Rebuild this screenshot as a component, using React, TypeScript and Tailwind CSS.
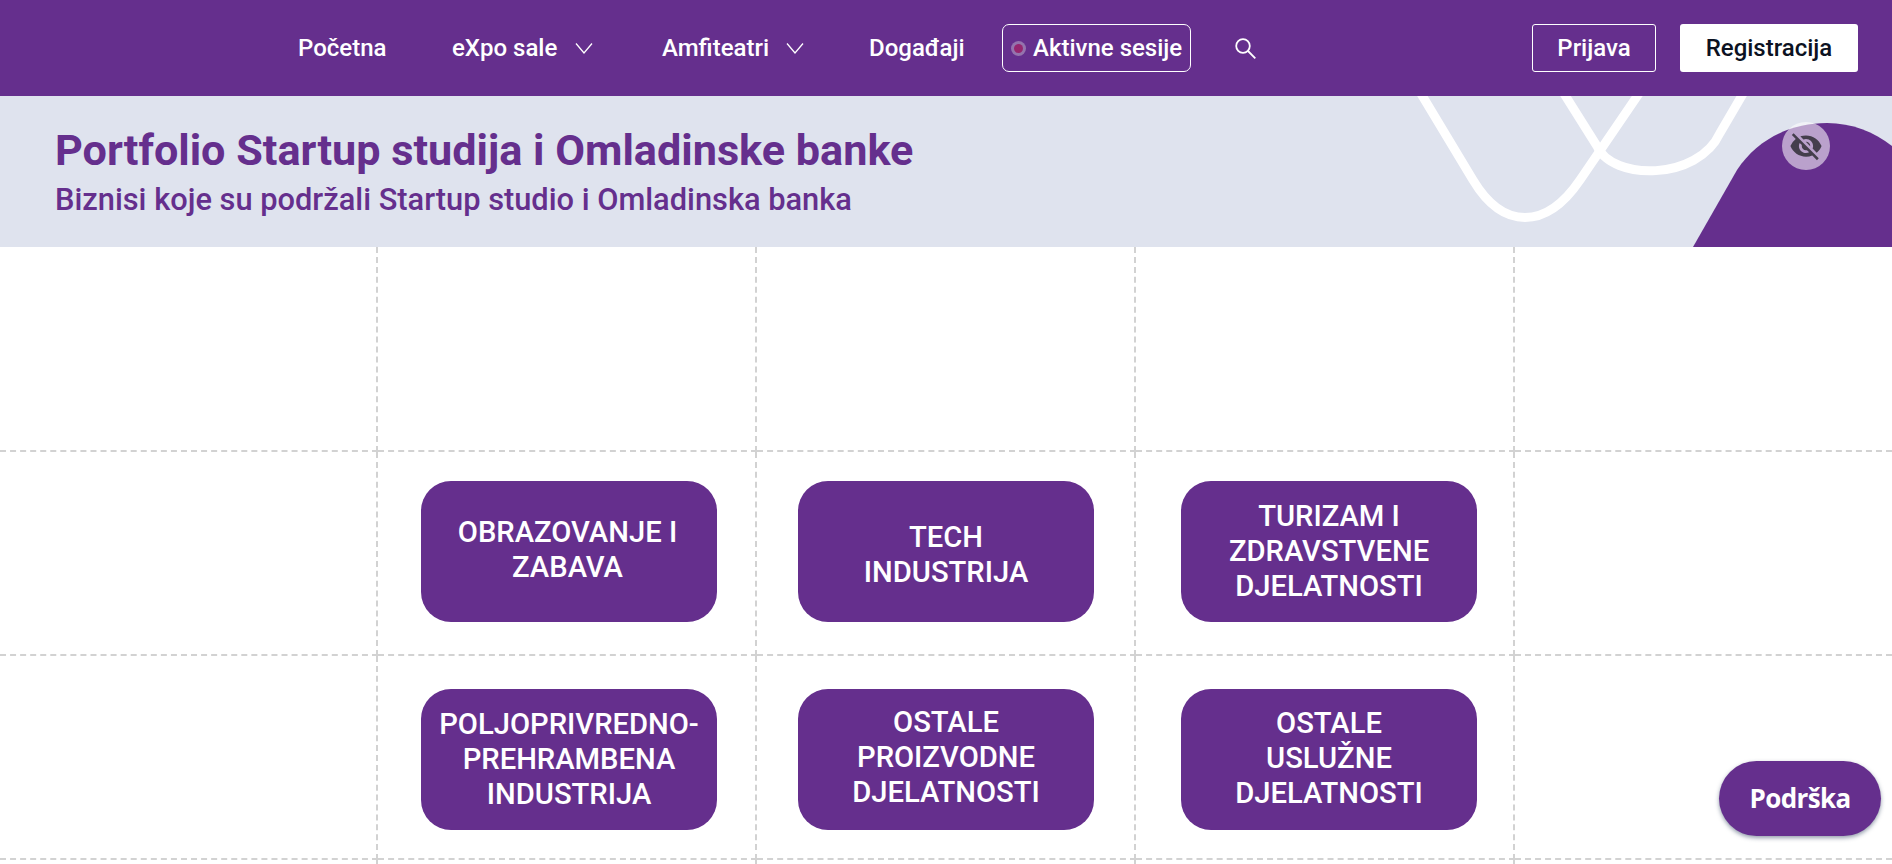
import { MdVisibilityOff } from "react-icons/md";

const rows = [
  [
    { lines: ["OBRAZOVANJE I", "ZABAVA"], pos: "mt-[29px] ml-[43px] pr-[3px] pb-[3px]" },
    { lines: ["TECH", "INDUSTRIJA"], pos: "mt-[29px] ml-[41px] pt-[6px]" },
    { lines: ["TURIZAM I", "ZDRAVSTVENE", "DJELATNOSTI"], pos: "mt-[29px] ml-[45px]" },
  ],
  [
    { lines: ["POLJOPRIVREDNO-", "PREHRAMBENA", "INDUSTRIJA"], pos: "mt-[33px] ml-[43px] pb-[1px]" },
    { lines: ["OSTALE", "PROIZVODNE", "DJELATNOSTI"], pos: "mt-[33px] ml-[41px] pb-[5px]" },
    { lines: ["OSTALE", "USLUŽNE", "DJELATNOSTI"], pos: "mt-[33px] ml-[45px] pb-[2px]" },
  ],
];

const cell = "border-r-2 border-b-2 border-dashed border-[#d2d2d2]";
const lastCell = "border-b-2 border-dashed border-[#d2d2d2]";

function Chevron({ className }: { className: string }) {
  return (
    <svg className={className} width="18" height="11" viewBox="0 0 18 11" fill="none" stroke="#fff" strokeWidth="1.3">
      <path d="M1 0.5 L9 10 L17 0.5" />
    </svg>
  );
}

function CategoryRow({ items }: { items: (typeof rows)[number] }) {
  return (
    <>
      <div className={cell} />
      {items.map((item) => (
        <div key={item.lines.join()} className={cell}>
          <button
            className={`flex h-[141px] w-[296px] flex-col items-center justify-center rounded-[30px] bg-[#652f8d] text-[29.2px] leading-[35px] font-medium text-white ${item.pos}`}
          >
            {item.lines.map((line) => (
              <span key={line}>{line}</span>
            ))}
          </button>
        </div>
      ))}
      <div className={lastCell} />
    </>
  );
}

export default function App() {
  return (
    <div className="relative h-screen overflow-hidden bg-white font-['Roboto',sans-serif]">
      <header className="flex h-[96px] items-center bg-[#652f8d] pr-[34px] pl-[298px] text-[24px] font-medium text-white">
        <nav className="flex items-center">
          <a className="w-[154px]">Početna</a>
          <a className="flex w-[210px] items-center">
            eXpo sale
            <Chevron className="ml-[18px]" />
          </a>
          <a className="flex w-[207px] items-center">
            Amfiteatri
            <Chevron className="ml-[17px]" />
          </a>
          <a className="w-[133px]">Događaji</a>
          <a className="flex h-[48px] w-[189px] items-center rounded-[7px] border border-white pl-[8px]">
            <span className="mr-[7px] flex size-[15px] shrink-0 items-center justify-center rounded-full bg-[#9473ad]">
              <span className="size-[9px] rounded-full bg-[#96266f]" />
            </span>
            Aktivne sesije
          </a>
          <svg className="ml-[44px]" width="21" height="21" viewBox="0 0 21 21" fill="none" stroke="#fff" strokeWidth="1.8">
            <circle cx="8" cy="8" r="6.8" />
            <path d="M13 13 L20.3 20.3" />
          </svg>
        </nav>
        <div className="ml-auto flex items-center gap-[24px]">
          <a className="flex h-[48px] w-[124px] items-center justify-center rounded-[3px] border border-white">
            Prijava
          </a>
          <a className="flex h-[48px] w-[178px] items-center justify-center rounded-[3px] bg-white text-[#0c1222]">
            Registracija
          </a>
        </div>
      </header>

      <section className="relative h-[151px] overflow-hidden bg-[#dfe3ee] pt-[29px] pl-[55px] text-[#652f8d]">
        <svg className="absolute top-0 left-[1400px] h-[151px] w-[492px]" viewBox="0 0 492 151" fill="none">
          <path d="M20 -4 L73 84 C103 134 146 134 180 84 L240 -4" stroke="#fff" strokeWidth="9" />
          <path d="M163 -4 L197 50 C212 85 298 85 320 37 L344 -4" stroke="#fff" strokeWidth="9" />
          <path
            d="M293 151 L337 74 C358 42 392 27 427 27 C452 27 474 36 492 50 L492 151 Z"
            fill="#652f8d"
          />
        </svg>
        <span className="absolute top-[26px] left-[1782px] flex size-[48px] items-center justify-center rounded-full bg-white/55">
          <MdVisibilityOff className="size-[34px] text-[#443e4c]" />
        </span>
        <h1 className="relative text-[43.2px] leading-[52px] font-bold">Portfolio Startup studija i Omladinske banke</h1>
        <h2 className="relative text-[30.8px] leading-[46px] font-medium">
          Biznisi koje su podržali Startup studio i Omladinska banka
        </h2>
      </section>

      <main className="grid grid-cols-[378px_379px_379px_379px_1fr] grid-rows-[205px_204px_204px_204px]">
        <div className={cell} />
        <div className={cell} />
        <div className={cell} />
        <div className={cell} />
        <div className={lastCell} />
        {rows.map((items, i) => (
          <CategoryRow key={i} items={items} />
        ))}
        <div className={cell} />
        <div className={cell} />
        <div className={cell} />
        <div className={cell} />
      </main>

      <button className="absolute top-[761px] left-[1719px] flex h-[75px] w-[162px] items-center justify-center rounded-[38px] bg-[#652f8d] font-['Open_Sans',sans-serif] text-[26px] font-bold tracking-tight text-white shadow-[0_2px_4px_rgba(40,60,90,0.5)]">
        Podrška
      </button>
    </div>
  );
}
